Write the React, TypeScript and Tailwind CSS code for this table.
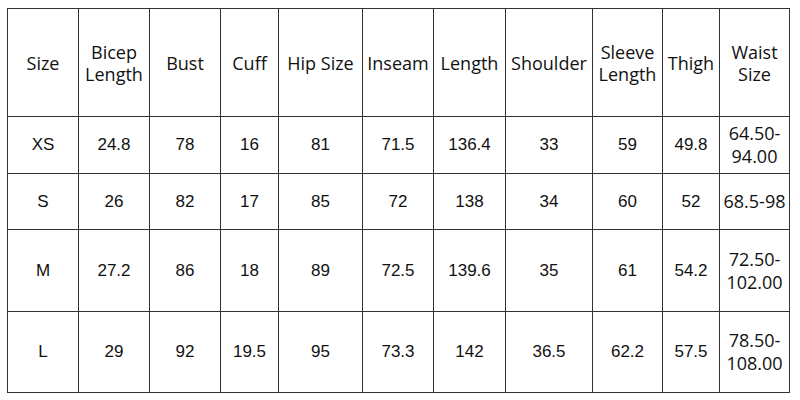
const headers = [
  "Size",
  "Bicep Length",
  "Bust",
  "Cuff",
  "Hip Size",
  "Inseam",
  "Length",
  "Shoulder",
  "Sleeve Length",
  "Thigh",
  "Waist Size",
];

const widths = [
  "w-[71px]",
  "w-[71px]",
  "w-[71px]",
  "w-[58px]",
  "w-[84px]",
  "w-[71px]",
  "w-[72px]",
  "w-[87px]",
  "w-[70px]",
  "w-[57px]",
  "w-[70px]",
];

const rows = [
  { h: "h-[57px]", cells: ["XS", "24.8", "78", "16", "81", "71.5", "136.4", "33", "59", "49.8"], waist: ["64.50-", "94.00"] },
  { h: "h-[56px]", cells: ["S", "26", "82", "17", "85", "72", "138", "34", "60", "52"], waist: ["68.5-98"] },
  { h: "h-[82px]", cells: ["M", "27.2", "86", "18", "89", "72.5", "139.6", "35", "61", "54.2"], waist: ["72.50-", "102.00"] },
  { h: "h-[81px]", cells: ["L", "29", "92", "19.5", "95", "73.3", "142", "36.5", "62.2", "57.5"], waist: ["78.50-", "108.00"] },
];

export default function App() {
  return (
    <div className="w-[800px] h-[400px] bg-white pl-[7px] pt-[8px]">
      <table className="table-fixed border-collapse w-[783px] text-[#111]">
        <colgroup>
          {widths.map((w, i) => (
            <col key={i} className={w} />
          ))}
        </colgroup>
        <thead>
          <tr className="h-[108px]">
            {headers.map((h) => (
              <th
                key={h}
                className="border-[1.5px] border-[#333] p-0 font-normal text-[18px] leading-[22px] text-center align-middle font-['Open_Sans',sans-serif] whitespace-nowrap"
              >
                {h.includes(" ") && h !== "Hip Size" ? (
                  <>
                    {h.split(" ")[0]}
                    <br />
                    {h.split(" ")[1]}
                  </>
                ) : (
                  h
                )}
              </th>
            ))}
          </tr>
        </thead>
        <tbody>
          {rows.map((r) => (
            <tr key={r.cells[0]} className={r.h}>
              {r.cells.map((c, i) => (
                <td
                  key={i}
                  className="border-[1.5px] border-[#333] p-0 text-[17px] text-center align-middle font-['Liberation_Sans',Arial,sans-serif]"
                >
                  {c}
                </td>
              ))}
              <td className="border-[1.5px] border-[#333] p-0 text-[18px] leading-[23px] text-center align-middle font-['Open_Sans',sans-serif] whitespace-nowrap">
                {r.waist.map((w, i) => (
                  <div key={i}>{w}</div>
                ))}
              </td>
            </tr>
          ))}
        </tbody>
      </table>
    </div>
  );
}
